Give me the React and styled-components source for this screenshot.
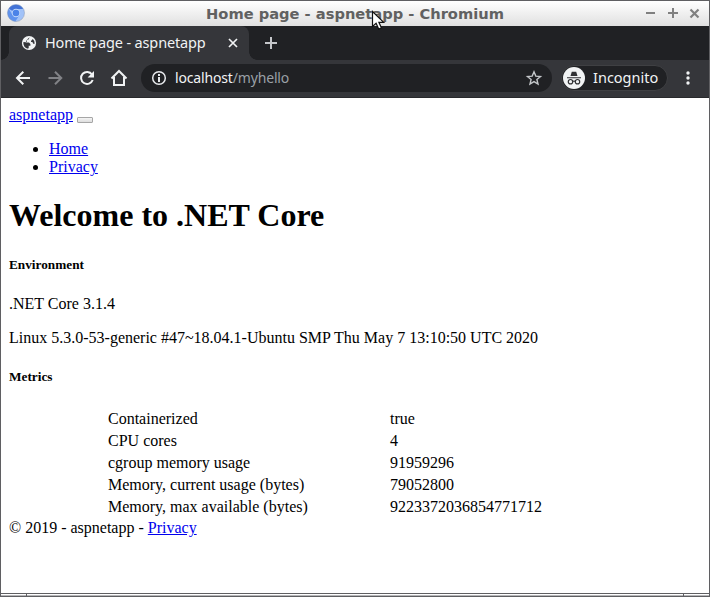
import React from "react";
import styled, { createGlobalStyle } from "styled-components";

const Global = createGlobalStyle`
  * { box-sizing: border-box; }
  html, body { margin: 0; overflow: hidden; background: #fff; }
`;

const Window = styled.div`
  position: relative;
  display: flex;
  flex-direction: column;
  width: 710px;
  height: 597px;
  border: 1px solid #5f5f62;
  background: #fff;
  overflow: hidden;
`;

const TitleBar = styled.header`
  display: flex;
  align-items: center;
  height: 25px;
  flex: none;
  padding: 0 8px 1px 6px;
  background: linear-gradient(#fff, #e0e0e0);
`;

const Title = styled.div`
  flex: 1;
  padding-left: 42px;
  text-align: center;
  white-space: nowrap;
  font: bold 14.67px/23px "DejaVu Sans", sans-serif;
  color: #616161;
`;

const WindowButtons = styled.div`
  display: flex;
  padding-top: 1px;
  svg { display: block; }
`;

const TabStrip = styled.div`
  display: flex;
  height: 34px;
  flex: none;
  padding-left: 8px;
  background: #202124;
`;

const Tab = styled.div`
  position: relative;
  display: flex;
  align-items: center;
  width: 240px;
  padding-left: 12px;
  border-radius: 8px 8px 0 0;
  background: #35363a;
  &::before, &::after {
    content: "";
    position: absolute;
    bottom: 0;
    width: 8px;
    height: 8px;
  }
  &::before { left: -8px; background: radial-gradient(circle at 0 0, transparent 7.5px, #35363a 8px); }
  &::after { right: -8px; background: radial-gradient(circle at 100% 0, transparent 7.5px, #35363a 8px); }
`;

const UiText = styled.span`
  width: ${(p) => p.$width}px;
  margin-left: ${(p) => p.$left}px;
  padding-bottom: ${(p) => p.$bottom ?? 1}px;
  font: ${(p) => p.$size || 14.5}px/20px "Noto Sans", sans-serif;
  letter-spacing: ${(p) => p.$spacing || 0}px;
  white-space: nowrap;
  color: ${(p) => p.$color || "#f1f3f4"};
`;

const IconSlot = styled.svg`
  display: block;
  flex: none;
  margin-left: ${(p) => p.$left || 0}px;
`;

const Toolbar = styled.nav`
  display: flex;
  align-items: center;
  height: 38px;
  flex: none;
  padding: 0 0 2px 13px;
  background: #35363a;
  border-bottom: 1px solid #28292c;
`;

const AddressBar = styled.div`
  display: flex;
  align-items: center;
  width: 411px;
  height: 28px;
  margin-left: 13px;
  padding-left: 9px;
  border-radius: 14px;
  background: #202124;
`;

const UrlPath = styled.span`color: #9aa0a6;`;

const IncognitoBadge = styled.div`
  display: flex;
  align-items: center;
  width: 107px;
  height: 26px;
  margin-left: 9px;
  padding-left: 1px;
  border: 1px solid #3f4043;
  border-radius: 13px;
  background: #202124;
`;

const Page = styled.main`
  flex: 1;
  padding: 8px;
  font: 16px "Liberation Serif", serif;
  color: #000;
`;

const Link = styled.a`
  color: #0000ee;
  text-decoration: underline;
`;

const Toggler = styled.button`
  width: 16px;
  height: 6px;
  padding: 0;
  border: 1px solid #a6a6a6;
  border-radius: 1px;
  background: linear-gradient(#f5f5f5, #ddd);
  vertical-align: -2px;
`;

const NavList = styled.ul`
  margin: 16px 0;
  padding-left: 40px;
`;

const Heading = styled.h1`
  margin: 21.44px 0;
  font-size: 32px;
`;

const SubHeading = styled.h5`
  margin: 22.18px 0;
  font-size: 13.28px;
`;

const Paragraph = styled.p`margin: 16px 0;`;

const Metrics = styled.table`
  margin-left: 96px;
  border-spacing: 2px;
  td { padding: 1px; }
  td:first-child { width: 280px; }
`;

const BottomFrame = styled.footer`
  display: flex;
  justify-content: space-between;
  height: 3px;
  flex: none;
  padding: 0 25px;
  border-top: 1px solid #5f5f62;
  background: linear-gradient(#fff 50%, #b5b5b7 50%);
`;

const FrameNotch = styled.span`
  width: 1px;
  height: 2px;
  background: #5f5f62;
`;

const Pointer = styled.svg`
  position: absolute;
  left: 370px;
  top: 9px;
`;

const metrics = [
  ["Containerized", "true"],
  ["CPU cores", "4"],
  ["cgroup memory usage", "91959296"],
  ["Memory, current usage (bytes)", "79052800"],
  ["Memory, max available (bytes)", "9223372036854771712"],
];

function ChromiumLogo() {
  return (
    <IconSlot width="18" height="18" viewBox="0 0 18 18">
      <circle cx="9" cy="9" r="8.4" fill="#a1c2f8" />
      <path d="M9 9 1.7 4.8A8.4 8.4 0 0 1 16.3 5H9Z" fill="#4272d7" />
      <path d="M1.7 4.8A8.4 8.4 0 0 0 8.3 17.4L12.5 11 9 9 5.5 11Z" fill="#5f93ee" />
      <circle cx="9" cy="9" r="4.2" fill="#c5dafb" />
      <circle cx="9" cy="9" r="3.3" fill="#4b83e8" />
      <circle cx="9" cy="9" r="8.5" fill="none" stroke="#8193b5" strokeWidth=".5" />
    </IconSlot>
  );
}

function Globe() {
  return (
    <IconSlot width="16" height="16" viewBox="0 0 16 16">
      <circle cx="8" cy="8" r="7.1" fill="#f1f3f4" />
      <path d="M8.5 2.3 7.8 4.3 6 5v1.7l-1.4.8H8l1.4 1.6v1.6H7.7v2.6A5.6 5.6 0 0 1 2.5 7.3l3.1 3v1.2l1.5 1.2v1.1A5.8 5.8 0 0 1 2.4 7L5 7.2 5.8 4.9 8.5 2.3ZM11.8 4 10 5.9V7l1.4.1.8 1.6h1.5A5.7 5.7 0 0 0 11.8 4Z" fill="#35363a" />
    </IconSlot>
  );
}

function NavIcons() {
  return (
    <>
      <IconSlot width="18" height="18" viewBox="0 0 18 18" fill="none" stroke="#f1f3f4" strokeWidth="2">
        <path d="M16 9H3.5M9.3 2.7 3 9l6.3 6.3" />
      </IconSlot>
      <IconSlot $left={14} width="18" height="18" viewBox="0 0 18 18" fill="none" stroke="#818286" strokeWidth="2">
        <path d="M2.5 9h12M9 2.7 15.3 9 9 15.3" />
      </IconSlot>
      <IconSlot $left={14} width="18" height="18" viewBox="0 0 18 18">
        <path d="M14 5.5A6 6 0 1 0 14.7 11" fill="none" stroke="#f1f3f4" strokeWidth="2" />
        <path d="M16 2v6.4H9.6Z" fill="#f1f3f4" />
      </IconSlot>
      <IconSlot $left={14} width="18" height="18" viewBox="0 0 18 18" fill="none" stroke="#f1f3f4" strokeWidth="2">
        <path d="M1.5 9.5 9 2l7.5 7.5M4 8v8h10V8" />
      </IconSlot>
    </>
  );
}

export default function App() {
  return (
    <>
      <Global />
      <Window>
        <TitleBar>
          <ChromiumLogo />
          <Title>Home page - aspnetapp - Chromium</Title>
          <WindowButtons>
            <svg width="58" height="16" viewBox="0 0 58 16" fill="none" stroke="#808080" strokeWidth="2">
              <path d="M3 7h9M25 7h10M30 2v10" />
              <path d="m47.5 3.5 8 8m0-8-8 8" strokeWidth="2.2" />
            </svg>
          </WindowButtons>
        </TitleBar>
        <TabStrip>
          <Tab>
            <Globe />
            <UiText $left={8} $width={182} $spacing={-0.15} $bottom={2}>Home page - aspnetapp</UiText>
            <IconSlot width="12" height="12" viewBox="0 0 12 12" stroke="#f1f3f4" strokeWidth="1.7">
              <path d="m2 2 8 8m0-8-8 8" />
            </IconSlot>
          </Tab>
          <IconSlot $left={15} width="14" height="34" viewBox="0 0 14 34" stroke="#c5c7ca" strokeWidth="2">
            <path d="M1 17h12M7 11v12" />
          </IconSlot>
        </TabStrip>
        <Toolbar>
          <NavIcons />
          <AddressBar>
            <IconSlot width="18" height="18" viewBox="0 0 18 18">
              <circle cx="9" cy="9" r="6.3" fill="none" stroke="#e8eaed" strokeWidth="1.5" />
              <path d="M8 5h2v2H8ZM8 8h2v5H8Z" fill="#e8eaed" />
            </IconSlot>
            <UiText $left={7} $width={350} $size={14} $spacing={-0.16} $bottom={0}>localhost<UrlPath>/myhello</UrlPath></UiText>
            <IconSlot width="18" height="18" viewBox="0 0 18 18" fill="none" stroke="#c4c7ca" strokeWidth="1.4">
              <path d="m9 2.8 1.8 4.3 4.7.4-3.6 3 1.1 4.5L9 12.6 5 15l1.1-4.5-3.6-3 4.7-.4Z" />
            </IconSlot>
          </AddressBar>
          <IncognitoBadge>
            <IconSlot width="22" height="22" viewBox="0 0 22 22">
              <circle cx="11" cy="11" r="11" fill="#f1f3f4" />
              <path d="M7.5 9 8.8 4.8h4.4L14.5 9ZM4 10.2h14v1H4Z" fill="#303134" />
              <g fill="none" stroke="#303134" strokeWidth="1.2">
                <circle cx="7.5" cy="14.7" r="2.2" />
                <circle cx="14.5" cy="14.7" r="2.2" />
                <path d="M9.7 14.4q1.3-.8 2.6 0" />
              </g>
            </IconSlot>
            <UiText $left={8} $width={70}>Incognito</UiText>
          </IncognitoBadge>
          <IconSlot $left={18} width="4" height="16" viewBox="0 0 4 16" fill="#f1f3f4">
            <circle cx="2" cy="3" r="1.7" /><circle cx="2" cy="8" r="1.7" /><circle cx="2" cy="13" r="1.7" />
          </IconSlot>
        </Toolbar>
        <Page>
          <div><Link>aspnetapp</Link> <Toggler aria-label="Toggle navigation" /></div>
          <NavList>
            <li><Link>Home</Link></li>
            <li><Link>Privacy</Link></li>
          </NavList>
          <Heading>Welcome to .NET Core</Heading>
          <SubHeading>Environment</SubHeading>
          <Paragraph>.NET Core 3.1.4</Paragraph>
          <Paragraph>Linux 5.3.0-53-generic #47~18.04.1-Ubuntu SMP Thu May 7 13:10:50 UTC 2020</Paragraph>
          <SubHeading>Metrics</SubHeading>
          <Metrics>
            <tbody>
              {metrics.map(([name, value]) => (
                <tr key={name}><td>{name}</td><td>{value}</td></tr>
              ))}
            </tbody>
          </Metrics>
          <div>© 2019 - aspnetapp - <Link>Privacy</Link></div>
        </Page>
        <BottomFrame><FrameNotch /><FrameNotch /></BottomFrame>
        <Pointer width="15" height="21" viewBox="0 0 15 21">
          <path d="M1.5 1.5v15l3.6-3.2 2.6 5.8 2.8-1.2-2.6-5.6h4.8Z" fill="#fff" stroke="#111" strokeWidth="1.2" />
        </Pointer>
      </Window>
    </>
  );
}
